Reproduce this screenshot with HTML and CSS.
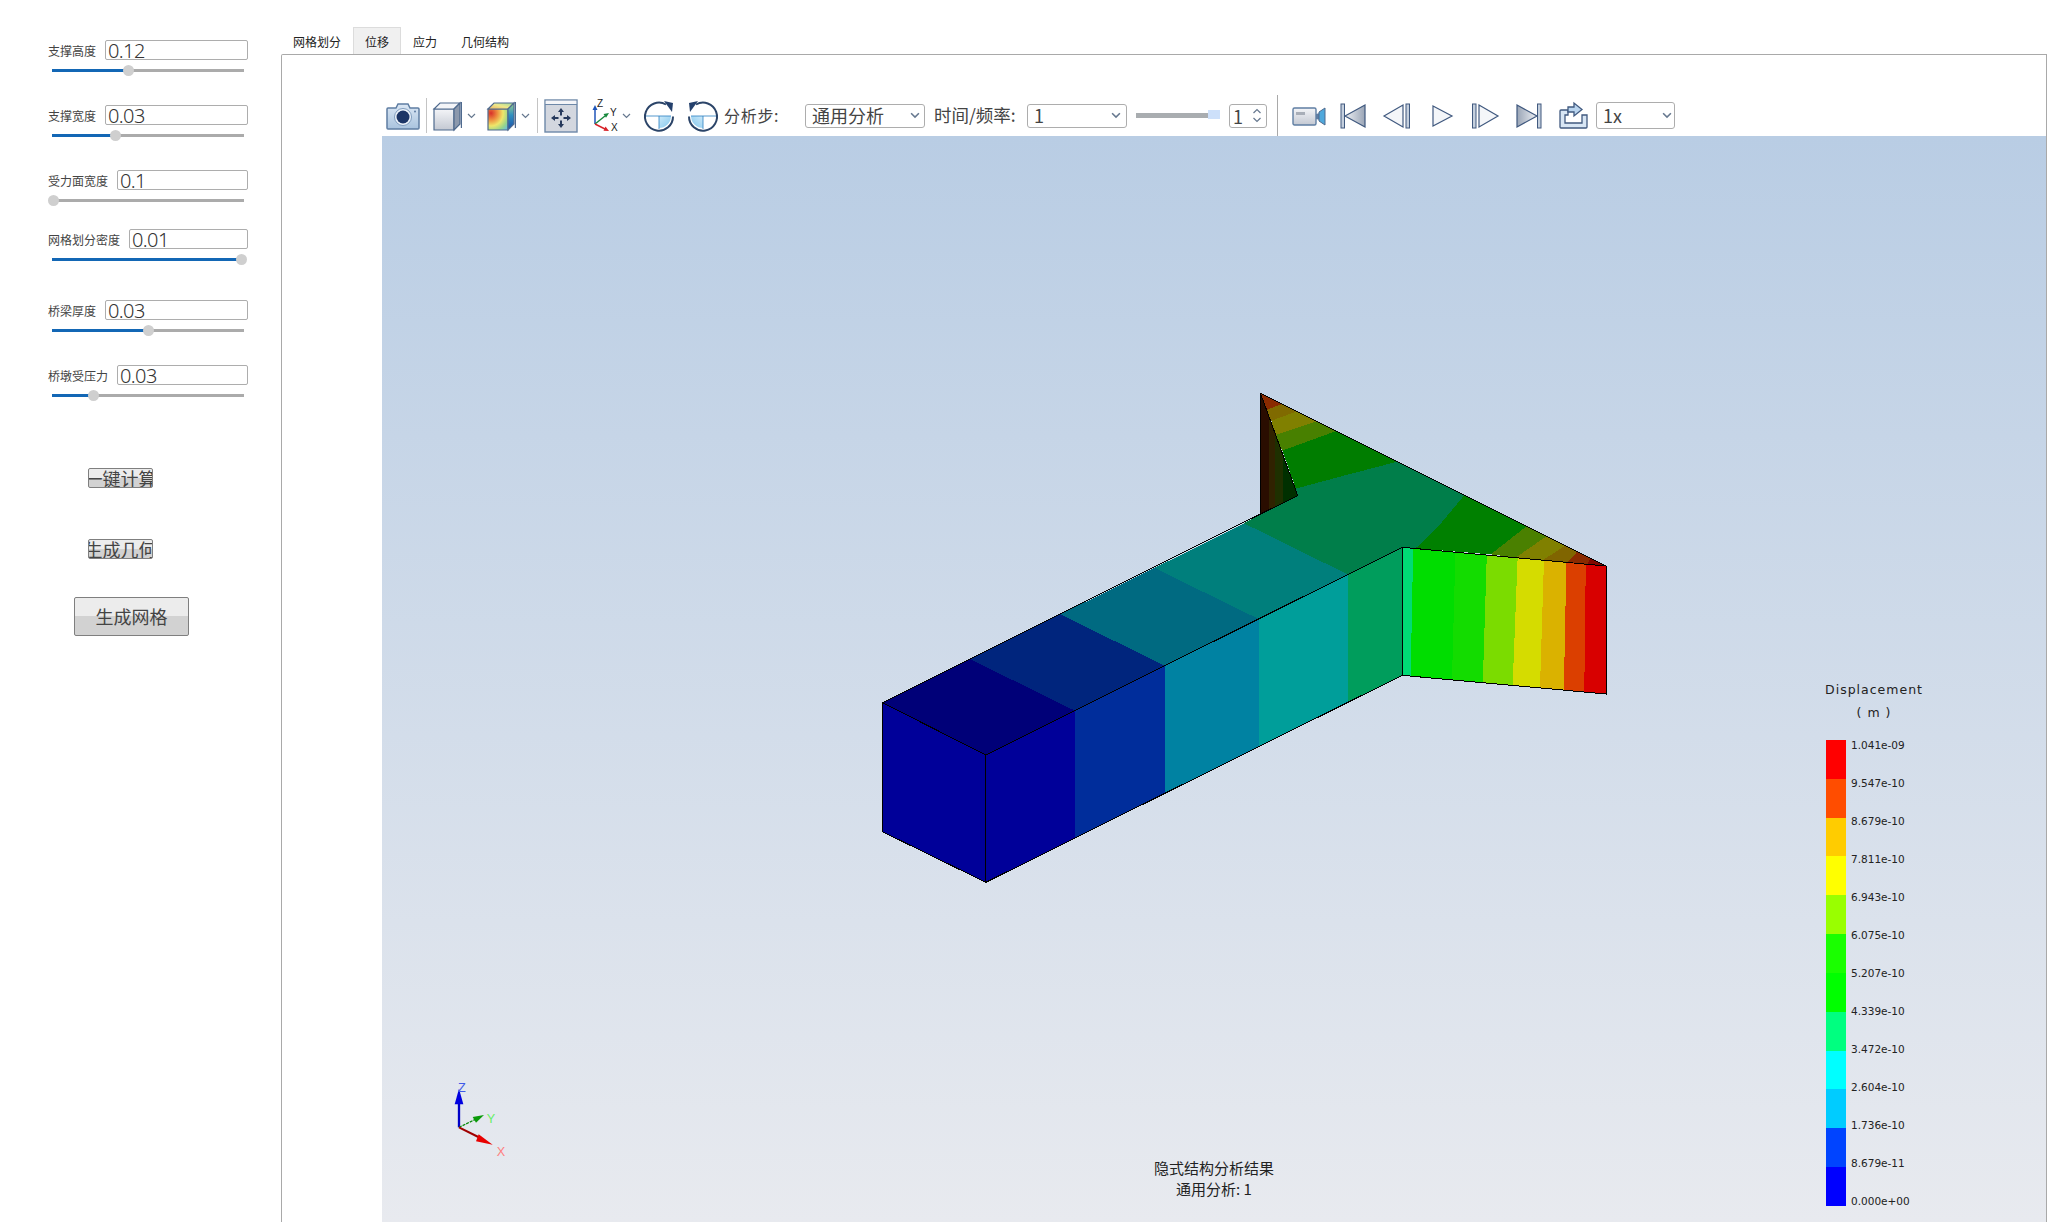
FILE: index.html
```html
<!DOCTYPE html>
<html lang="zh-CN">
<head>
<meta charset="utf-8">
<title>隐式结构分析</title>
<link rel="stylesheet" href="styles.css">
</head>
<body>
<svg class="defs" aria-hidden="true">
  <defs>
    <linearGradient id="gSteel" x1="0" y1="0" x2="0" y2="1"><stop offset="0" stop-color="#f4f5f8"/><stop offset="1" stop-color="#c3c8d2"/></linearGradient>
    <linearGradient id="gCam" x1="0" y1="0" x2="0" y2="1"><stop offset="0" stop-color="#dbe7f4"/><stop offset="1" stop-color="#a9c3de"/></linearGradient>
    <linearGradient id="gGrey" x1="0" y1="0" x2="1" y2="0"><stop offset="0" stop-color="#eef0f4"/><stop offset="1" stop-color="#9aa5b6"/></linearGradient>
    <linearGradient id="gGreyR" x1="1" y1="0" x2="0" y2="0"><stop offset="0" stop-color="#eef0f4"/><stop offset="1" stop-color="#9aa5b6"/></linearGradient>
    <linearGradient id="gSide" x1="0" y1="0" x2="0" y2="1"><stop offset="0" stop-color="#9ad08a"/><stop offset="0.45" stop-color="#2f8fc0"/><stop offset="1" stop-color="#1a4fa8"/></linearGradient>
    <linearGradient id="gTop" x1="0" y1="1" x2="1" y2="0"><stop offset="0" stop-color="#f0b060"/><stop offset="0.5" stop-color="#eee88a"/><stop offset="1" stop-color="#9ad8a0"/></linearGradient>
    <radialGradient id="gHeat" cx="0.15" cy="0.2" r="1.1"><stop offset="0" stop-color="#d8302a"/><stop offset="0.3" stop-color="#ee9240"/><stop offset="0.55" stop-color="#eee66a"/><stop offset="0.8" stop-color="#96d48c"/><stop offset="1" stop-color="#66bfe0"/></radialGradient>
    <linearGradient id="gQuad" x1="0" y1="0" x2="1" y2="1"><stop offset="0" stop-color="#cdeafa"/><stop offset="1" stop-color="#82c6ec"/></linearGradient>
  </defs>
</svg>
<div class="app">
  <aside class="params">
    <div class="param gap-std">
      <div class="param-head"><span class="param-label">支撑高度</span><input class="param-input" value="0.12"></div>
      <div class="slider"><div class="slider-fill" style="width:39.6%"><span class="slider-knob"></span></div></div>
    </div>
    <div class="param gap-std">
      <div class="param-head"><span class="param-label">支撑宽度</span><input class="param-input" value="0.03"></div>
      <div class="slider"><div class="slider-fill" style="width:33%"><span class="slider-knob"></span></div></div>
    </div>
    <div class="param gap-small">
      <div class="param-head"><span class="param-label">受力面宽度</span><input class="param-input" value="0.1"></div>
      <div class="slider"><div class="slider-fill" style="width:0.8%"><span class="slider-knob"></span></div></div>
    </div>
    <div class="param gap-large">
      <div class="param-head"><span class="param-label">网格划分密度</span><input class="param-input" value="0.01"></div>
      <div class="slider"><div class="slider-fill" style="width:98.9%"><span class="slider-knob"></span></div></div>
    </div>
    <div class="param gap-std">
      <div class="param-head"><span class="param-label">桥梁厚度</span><input class="param-input" value="0.03"></div>
      <div class="slider"><div class="slider-fill" style="width:50%"><span class="slider-knob"></span></div></div>
    </div>
    <div class="param">
      <div class="param-head"><span class="param-label">桥墩受压力</span><input class="param-input" value="0.03"></div>
      <div class="slider"><div class="slider-fill" style="width:21.4%"><span class="slider-knob"></span></div></div>
    </div>
    <button class="btn btn-small btn-first">一键计算</button>
    <button class="btn btn-small btn-second">生成几何</button>
    <button class="btn btn-big">生成网格</button>
  </aside>

  <main class="workspace">
    <nav class="tabs">
      <span class="tab">网格划分</span>
      <span class="tab tab-active">位移</span>
      <span class="tab">应力</span>
      <span class="tab">几何结构</span>
    </nav>
    <section class="pane">
      <div class="toolbar">
        <svg class="ic tb-camera" viewBox="0 0 34 28">
          <path d="M2 6h8l2-4h10l2 4h8a1 1 0 0 1 1 1v19a1 1 0 0 1-1 1H2a1 1 0 0 1-1-1V7a1 1 0 0 1 1-1z" fill="url(#gCam)" stroke="#5f7ea3" stroke-width="1.5"/>
          <circle cx="17" cy="15" r="8.5" fill="#eef4fb" stroke="#7f9cbd"/>
          <circle cx="17" cy="15" r="6.5" fill="#1c3566"/>
          <circle cx="29" cy="9.5" r="1" fill="#5f7ea3"/>
        </svg>
        <span class="sep tb-sep1"></span>
        <svg class="ic tb-cube" viewBox="0 0 29 30">
          <path d="M1 8h20v21H1z" fill="url(#gSteel)" stroke="#4f6a8e" stroke-width="1.2"/>
          <path d="M1 8l6-6h20l-6 6z" fill="#f4f5f8" stroke="#4f6a8e" stroke-width="1.2"/>
          <path d="M21 8l6-6v21l-6 6z" fill="#8c99ad" stroke="#4f6a8e" stroke-width="1.2"/>
          <path d="M28.4 1v26" stroke="#4f6a8e" stroke-width="1.2"/>
        </svg>
        <svg class="ic chev tb-chev1" viewBox="0 0 9 6"><path d="M1 1l3.5 3.5L8 1" fill="none" stroke="#66788f" stroke-width="1.2"/></svg>
        <svg class="ic tb-heat" viewBox="0 0 29 30">
          <path d="M1 8h20v21H1z" fill="url(#gHeat)" stroke="#4f6a8e" stroke-width="1.2"/>
          <path d="M1 8l6-6h20l-6 6z" fill="url(#gTop)" stroke="#4f6a8e" stroke-width="1.2"/>
          <path d="M21 8l6-6v21l-6 6z" fill="url(#gSide)" stroke="#4f6a8e" stroke-width="1.2"/>
          <path d="M28.4 1v26" stroke="#4f6a8e" stroke-width="1.2"/>
        </svg>
        <svg class="ic chev tb-chev1" viewBox="0 0 9 6"><path d="M1 1l3.5 3.5L8 1" fill="none" stroke="#66788f" stroke-width="1.2"/></svg>
        <span class="sep tb-sep2"></span>
        <svg class="ic tb-fit" viewBox="0 0 34 34">
          <rect x="1" y="1" width="32" height="32" fill="#d3d7df" stroke="#6d88a8" stroke-width="1.4"/>
          <rect x="1.700" y="1.700" width="30.600" height="3.500" fill="#f4f5f8"/>
          <path d="M1 5.500h32" stroke="#6d88a8"/>
          <path d="M17 9l-3 4h2v3.500h2V13h2zM17 29l3-4h-2v-3.500h-2V25h-2zM7 19l4-3v2h3.500v2H11v2zM27 19l-4 3v-2h-3.500v-2H23v-2z" fill="#26395c"/>
        </svg>
        <svg class="ic tb-axes" viewBox="0 0 26 33">
          <path d="M4 25V9" stroke="#1f55b8" stroke-width="1.500"/><path d="M4 6L1.500 11h5z" fill="#1f55b8"/>
          <path d="M4 25L14 17" stroke="#17893c" stroke-width="1.500"/><path d="M18 14l-5.500 1 2.500 3.800z" fill="#17893c"/>
          <path d="M4 25l10 5" stroke="#d8232a" stroke-width="1.500"/><path d="M18 32l-5.500-.300 2-4.200z" fill="#d8232a"/>
          <text x="6" y="8" class="axis-t">Z</text><text x="19" y="17" class="axis-t">Y</text><text x="20" y="32" class="axis-t">X</text>
        </svg>
        <svg class="ic chev tb-chev1" viewBox="0 0 9 6"><path d="M1 1l3.500 3.500L8 1" fill="none" stroke="#66788f" stroke-width="1.200"/></svg>
        <svg class="ic tb-rot1" viewBox="0 0 32 32">
          <path d="M16 16h12a12 12 0 0 1-12 12z" fill="url(#gQuad)"/>
          <path d="M3 16h25M16 16v13" fill="none" stroke="#2a7fc0" stroke-width="0.800"/>
          <path d="M23 4.500A14 14 0 1 0 30 16.500" fill="none" stroke="#2b4468" stroke-width="2"/>
          <path d="M21 1l9 2-1 9z" fill="#24406c"/>
        </svg>
        <svg class="ic tb-rot2" viewBox="0 0 32 32">
          <g transform="translate(32 0) scale(-1 1)">
            <path d="M16 16h12a12 12 0 0 1-12 12z" fill="url(#gQuad)"/>
            <path d="M3 16h25M16 16v13" fill="none" stroke="#2a7fc0" stroke-width="0.800"/>
            <path d="M23 4.500A14 14 0 1 0 30 16.500" fill="none" stroke="#2b4468" stroke-width="2"/>
            <path d="M21 1l9 2-1 9z" fill="#24406c"/>
          </g>
        </svg>
        <span class="tb-label tb-step">分析步:</span>
        <div class="combo tb-combo-step"><span>通用分析</span><svg class="combo-arrow" viewBox="0 0 9 6"><path d="M1 1l3.500 3.500L8 1" fill="none" stroke="#66788f" stroke-width="1.400"/></svg></div>
        <span class="tb-label tb-time">时间/频率:</span>
        <div class="combo tb-combo-time"><span>1</span><svg class="combo-arrow" viewBox="0 0 9 6"><path d="M1 1l3.500 3.500L8 1" fill="none" stroke="#66788f" stroke-width="1.400"/></svg></div>
        <div class="frame-slider"><span class="frame-knob"></span></div>
        <div class="combo tb-spin"><span>1</span>
          <div class="spin-arrows">
            <svg viewBox="0 0 9 6"><path d="M1 5l3.500-3.500L8 5" fill="none" stroke="#66788f" stroke-width="1.200"/></svg>
            <svg viewBox="0 0 9 6"><path d="M1 1l3.500 3.500L8 1" fill="none" stroke="#66788f" stroke-width="1.200"/></svg>
          </div>
        </div>
        <span class="sep tb-sep3"></span>
        <svg class="ic tb-video" viewBox="0 0 34 20">
          <rect x="1" y="2" width="23" height="17" rx="1.500" fill="url(#gSteel)" stroke="#5f7ea3" stroke-width="1.400"/>
          <rect x="4" y="6" width="9" height="3" fill="#a8aeb8"/>
          <path d="M24 8l4-1v7l-4-1z" fill="#5f7ea3"/>
          <path d="M27 6l6-4v17l-6-4z" fill="#4fa8dc" stroke="#4f6a8e"/>
        </svg>
        <svg class="ic tb-first" viewBox="0 0 26 26">
          <rect x="1" y="1" width="3.500" height="24" fill="#c4cfdd" stroke="#40597f"/>
          <path d="M5 13L25 2v22z" fill="url(#gGrey)" stroke="#40597f" stroke-width="1.200"/>
        </svg>
        <svg class="ic tb-prev" viewBox="0 0 28 26">
          <path d="M1 13L20 2v22z" fill="#f4f6f9" stroke="#40597f" stroke-width="1.200"/>
          <rect x="23" y="1" width="3.500" height="24" fill="#c4cfdd" stroke="#40597f"/>
        </svg>
        <svg class="ic tb-play" viewBox="0 0 21 24">
          <path d="M1 2l19 10L1 22z" fill="#f4f6f9" stroke="#40597f" stroke-width="1.200"/>
        </svg>
        <svg class="ic tb-next" viewBox="0 0 28 26">
          <rect x="1.500" y="1" width="3.500" height="24" fill="#c4cfdd" stroke="#40597f"/>
          <path d="M8 2l19 11L8 24z" fill="#f4f6f9" stroke="#40597f" stroke-width="1.200"/>
        </svg>
        <svg class="ic tb-last" viewBox="0 0 26 26">
          <path d="M1 2l20 11L1 24z" fill="url(#gGreyR)" stroke="#40597f" stroke-width="1.200"/>
          <rect x="21.500" y="1" width="3.500" height="24" fill="#c4cfdd" stroke="#40597f"/>
        </svg>
        <svg class="ic tb-export" viewBox="0 0 29 27">
          <path d="M2 8h7v5H6v8h17v-8h5v12a1 1 0 0 1-1 1H2a1 1 0 0 1-1-1V9a1 1 0 0 1 1-1z" fill="#d8e6f4" stroke="#40597f" stroke-width="1.300"/>
          <path d="M9 5h6V1l8 6.500-8 6.500v-4h-6z" fill="#b9d4ee" stroke="#40597f" stroke-width="1.300"/>
        </svg>
        <div class="combo tb-combo-speed"><span>1x</span><svg class="combo-arrow" viewBox="0 0 9 6"><path d="M1 1l3.500 3.500L8 1" fill="none" stroke="#66788f" stroke-width="1.400"/></svg></div>
      </div>

      <div class="viewport">
        <svg class="model" viewBox="0 0 1568 1560" preserveAspectRatio="none">
          <g class="faces">
            <path fill="#000099" d="M45 968L253 1125V1507L45 1355z"/>
            <path fill="#000099" d="M253 1125L432 992V1375L253 1507z"/>
            <path fill="#002d9b" d="M432 992L613 857V1240L432 1375z"/>
            <path fill="#0082a2" d="M613 857L802 716V1100L613 1240z"/>
            <path fill="#009e9a" d="M802 716L981 583V967L802 1100z"/>
            <path fill="#009d5c" d="M981 583L1090 502V886L981 967z"/>

            <path fill="#00db75" d="M1090 502L1112 505L1107 889L1090 886z"/>
            <path fill="#00dd00" d="M1112 505L1197 516L1190 900L1107 889z"/>
            <path fill="#13dc00" d="M1197 516L1260 525L1252 908L1190 900z"/>
            <path fill="#7bdc00" d="M1260 525L1322 534L1312 916L1252 908z"/>
            <path fill="#d5dc00" d="M1322 534L1375 541L1367 923L1312 916z"/>
            <path fill="#dab200" d="M1375 541L1420 547L1415 929L1367 923z"/>
            <path fill="#db3f00" d="M1420 547L1459 553L1456 935L1415 929z"/>
            <path fill="#d80000" d="M1459 553L1500 558V942L1456 935z"/>

            <path fill="#000078" d="M45 968L222 838L432 992L253 1125z"/>
            <path fill="#00257d" d="M222 838L403 703L612 857L432 992z"/>
            <path fill="#006a81" d="M403 703L592 564L800 716L612 857z"/>
            <path fill="#007f7c" d="M592 564L772 430L980 583L800 716z"/>
            <path fill="#007e4a" d="M772 430L805 402L880 347L876 326L965 290L1080 245L1215 345.600L1165 435L1117 505L1090 502L980 583z"/>

            <path fill="#8a2a00" d="M805 40L848 72L817 90z"/>
            <path fill="#806a00" d="M817 90L848 72L878 94.400L827 122z"/>
            <path fill="#808000" d="M827 122L878 94.400L918 124.200L835 165z"/>
            <path fill="#488000" d="M835 165L918 124.200L957 153.300L849 212z"/>
            <path fill="#007d00" d="M849 212L957 153.300L1080 245L965 290L876 326z"/>

            <path fill="#008000" d="M1215 345.600L1340 438.700L1268 523L1117 505L1165 435z"/>
            <path fill="#4a8000" d="M1340 438.700L1380 468.600L1318 533L1268 523z"/>
            <path fill="#808000" d="M1380 468.600L1418 496.900L1372 541L1318 533z"/>
            <path fill="#806500" d="M1418 496.900L1442 514.800L1422 548L1372 541z"/>
            <path fill="#8a2a00" d="M1442 514.800L1468 534.100L1462 553L1422 548z"/>
            <path fill="#800800" d="M1468 534.100L1500 558L1462 553z"/>

            <path fill="#2a0d00" d="M805 40L822 110V390L805 402z"/>
            <path fill="#302200" d="M822 110L835 163V380L822 390z"/>
            <path fill="#1e3000" d="M835 163L850 224V369L835 380z"/>
            <path fill="#003000" d="M850 224L880 347L850 369z"/>
          </g>
          <g class="edges">
            <path d="M45 968V1355L253 1507L1090 886L1500 942V558L805 40V402L45 968L253 1125L1090 502L1500 558"/>
            <path d="M253 1125V1507M1090 502V886M805 40L880 347L805 402"/>
          </g>
        </svg>

        <svg class="triad" viewBox="0 0 360 300">
          <path d="M87 172V95" stroke="#0000c8" stroke-width="7"/>
          <path d="M87 56L74 103L100 103z" fill="#0000e0"/>
          <path d="M87 172L136 148" stroke="#0a8a0a" stroke-width="4" stroke-dasharray="9 3"/>
          <path d="M162 135L128 141L138 158z" fill="#0a9a0a"/>
          <path d="M87 172L145 201" stroke="#a00000" stroke-width="6"/>
          <path d="M188 224L146 193L138 214z" fill="#e80000"/>
          <text x="84" y="66" class="triad-t triad-z">Z</text>
          <text x="170" y="160" class="triad-t triad-y">Y</text>
          <text x="200" y="258" class="triad-t triad-x">X</text>
        </svg>

        <div class="legend">
          <div class="legend-title">Displacement<br>( m )</div>
          <div class="legend-body">
            <div class="legend-bar"></div>
            <ul class="legend-labels">
              <li>1.041e-09</li><li>9.547e-10</li><li>8.679e-10</li><li>7.811e-10</li><li>6.943e-10</li>
              <li>6.075e-10</li><li>5.207e-10</li><li>4.339e-10</li><li>3.472e-10</li><li>2.604e-10</li>
              <li>1.736e-10</li><li>8.679e-11</li><li>0.000e+00</li>
            </ul>
          </div>
        </div>

        <div class="caption">隐式结构分析结果<br>通用分析: 1</div>
      </div>
    </section>
  </main>
</div>
</body>
</html>
```

FILE: styles.css
```css
* { box-sizing: border-box; }

html, body {
  margin: 0;
  height: 100%;
  overflow: hidden;
  background: #fff;
}

body {
  font-family: "Noto Sans CJK SC", "Noto Sans", sans-serif;
  color: #333;
}

.defs {
  position: absolute;
  width: 0;
  height: 0;
}

.app {
  display: flex;
  height: 1222px;
}

/* left parameter column */
.params {
  flex: none;
  width: 281px;
  padding: 40px 33px 0 48px;
  display: flex;
  flex-direction: column;
  align-items: flex-start;
}

.param { width: 200px; }
.gap-std { margin-bottom: 27px; }
.gap-small { margin-bottom: 21px; }
.gap-large { margin-bottom: 33px; }

.param-head {
  display: flex;
  align-items: center;
  height: 20px;
}

.param-label {
  flex: none;
  font-size: 12px;
  color: #444;
  margin-right: 9px;
}

.param-input {
  flex: 1;
  min-width: 0;
  height: 20px;
  padding: 0 0 0 2px;
  border: 1px solid #adadad;
  border-radius: 2px;
  background: #fff;
  font-family: "Noto Sans", sans-serif;
  font-size: 20px;
  font-weight: 300;
  letter-spacing: -0.6px;
  line-height: 18px;
  color: #333;
  outline: none;
}

.slider {
  position: relative;
  height: 3px;
  margin: 8.5px 4px 6.5px;
  background: #ababab;
}

.slider-fill {
  position: relative;
  height: 100%;
  background: #1367b5;
}

.slider-knob {
  position: absolute;
  right: -5.5px;
  top: -4px;
  width: 11px;
  height: 11px;
  border-radius: 50%;
  background: #cfcfcf;
}

.btn {
  display: flex;
  align-items: center;
  justify-content: center;
  padding: 0 0 1px;
  overflow: hidden;
  white-space: nowrap;
  border: 1px solid #7f7f7f;
  border-radius: 2px;
  background: linear-gradient(#ececec 0 50%, #d2d2d2 50% 100%);
  font-family: inherit;
  font-size: 18px;
  color: #444;
}

.btn-small { width: 65px; height: 20px; margin-left: 40px; }
.btn-first { margin-top: 65px; }
.btn-second { margin-top: 51px; }
.btn-big { width: 115px; height: 39px; margin: 38px 0 0 26px; }

/* tabs and pane */
.workspace {
  flex: 1;
  min-width: 0;
  display: flex;
  flex-direction: column;
  padding: 27px 9px 0 0;
}

.tabs {
  display: flex;
  height: 27px;
  flex: none;
}

.tab {
  display: flex;
  align-items: center;
  padding: 1px 12px 0;
  font-size: 12px;
  color: #222;
}

.tab-active {
  background: #f0f0f0;
  border: 1px solid #dcdcdc;
  border-bottom: 0;
  padding: 1px 11px 0;
}

.pane {
  flex: 1;
  min-height: 0;
  display: flex;
  flex-direction: column;
  border: 1px solid #a9a9a9;
  border-bottom: 0;
  border-top-left-radius: 2px;
  padding: 40px 0 0 100px;
}

/* toolbar */
.toolbar {
  flex: none;
  height: 41px;
  display: flex;
  align-items: center;
  padding-left: 4px;
}

.ic { flex: none; display: block; overflow: visible; }

.sep {
  flex: none;
  width: 1px;
  background: #c4c4c4;
}

.tb-camera { width: 34px; height: 28px; }
.tb-sep1 { margin-left: 6px; height: 35px; }
.tb-cube { width: 29px; height: 30px; margin-left: 6px; }
.chev { width: 9px; height: 6px; }
.tb-chev1 { margin-left: 5px; }
.tb-heat { width: 29px; height: 30px; margin-left: 11px; }
.tb-sep2 { margin-left: 7px; height: 35px; }
.tb-fit { width: 34px; height: 34px; margin-left: 6px; }
.tb-axes { width: 26px; height: 33px; margin-left: 13px; }
.tb-rot1 { width: 32px; height: 32px; margin-left: 12px; }
.tb-rot2 { width: 32px; height: 32px; margin-left: 12px; }

.axis-t {
  font-family: "Liberation Sans", sans-serif;
  font-size: 10px;
  fill: #222;
}

.tb-label {
  flex: none;
  font-size: 16px;
  line-height: 1;
  color: #444;
  padding-bottom: 2px;
}

.tb-step { width: 64px; margin-left: 5px; letter-spacing: 0.7px; }
.tb-time { width: 85px; margin-left: 9px; font-size: 17.500px; }

.combo {
  flex: none;
  display: flex;
  align-items: center;
  justify-content: space-between;
  height: 24px;
  padding: 0 4px 2px 6px;
  border: 1px solid #adadad;
  border-radius: 3px;
  background: #fff;
  font-size: 18px;
  line-height: 1;
  color: #444;
}

.combo-arrow { width: 10px; height: 7px; flex: none; margin-top: 2px; }

.tb-combo-step { width: 120px; margin-left: 17px; }
.tb-combo-time { width: 100px; margin-left: 8px; padding-right: 5px; }
.tb-combo-speed { width: 79px; height: 27px; margin-left: 8px; padding-right: 2px; }

.frame-slider {
  flex: none;
  position: relative;
  width: 84px;
  height: 5px;
  margin-left: 9px;
  background: #a9adb0;
}

.frame-knob {
  position: absolute;
  right: 0;
  top: -3px;
  width: 12px;
  height: 9px;
  background: #cde0fa;
}

.tb-spin { width: 38px; margin-left: 9px; padding: 0 4px 0 3px; }

.spin-arrows {
  display: flex;
  flex-direction: column;
  gap: 3px;
}

.spin-arrows svg { display: block; width: 10px; height: 6px; }

.tb-sep3 { margin-left: 10px; height: 41px; background: #a9a9a9; }
.tb-video { width: 34px; height: 20px; margin-left: 14px; }
.tb-first { width: 26px; height: 26px; margin-left: 14px; }
.tb-prev { width: 28px; height: 26px; margin-left: 17px; }
.tb-play { width: 21px; height: 24px; margin-left: 21px; }
.tb-next { width: 28px; height: 26px; margin-left: 18px; }
.tb-last { width: 26px; height: 26px; margin-left: 17px; }
.tb-export { width: 29px; height: 27px; margin-left: 17px; }

/* 3D viewport */
.viewport {
  position: relative;
  flex: 1;
  min-height: 0;
  overflow: hidden;
  background: linear-gradient(#b9cde4, #e8eaef);
}

.model {
  position: absolute;
  left: 478px;
  top: 244px;
  width: 780px;
  height: 520px;
}

.faces path { shape-rendering: crispEdges; }

.edges path {
  fill: none;
  stroke: #000;
  stroke-width: 1;
  vector-effect: non-scaling-stroke;
  shape-rendering: crispEdges;
}

.triad {
  position: absolute;
  left: 48px;
  top: 934px;
  width: 120px;
  height: 100px;
}

.triad-t {
  font-family: "Liberation Sans", sans-serif;
  font-size: 38px;
}

.triad-z { fill: #3f5ae8; }
.triad-y { fill: #66ee66; }
.triad-x { fill: #ff7f7f; }

.legend {
  position: absolute;
  left: 1443px;
  top: 544px;
  width: 110px;
}

.legend-title {
  width: 98px;
  font-family: "DejaVu Sans", sans-serif;
  font-size: 12.500px;
  line-height: 23px;
  letter-spacing: 1px;
  text-align: center;
  color: #222;
  margin-top: -2px;
}

.legend-body {
  display: flex;
  margin-top: 2px;
}

.legend-bar {
  flex: none;
  width: 20px;
  height: 466px;
  margin: 14px 0 0 1px;
  background: linear-gradient(
    #ff0000 0 8.33%, #ff4d00 8.33% 16.67%, #ffcc00 16.67% 25%, #ffff00 25% 33.33%,
    #99ff00 33.33% 41.67%, #1aff00 41.67% 50%, #00ff00 50% 58.33%, #00ff80 58.33% 66.67%,
    #00ffff 66.67% 75%, #00ccff 75% 83.33%, #0044ff 83.33% 91.67%, #0000ff 91.67% 100%
  );
}

.legend-labels {
  list-style: none;
  margin: 0 0 0 5px;
  padding: 0;
  font-family: "DejaVu Sans", sans-serif;
  font-size: 10.500px;
  line-height: 38.030px;
  white-space: nowrap;
  color: #222;
}

.caption {
  position: absolute;
  left: 0;
  right: 0;
  bottom: 23px;
  text-align: center;
  font-size: 15px;
  line-height: 21px;
  color: #222;
}
```
